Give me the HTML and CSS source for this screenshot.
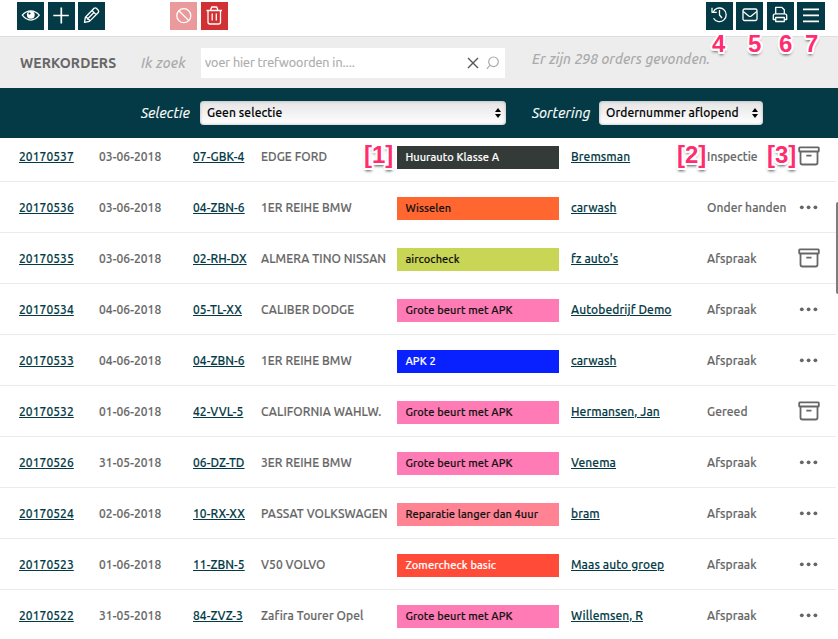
FILE: index.html
```html
<!DOCTYPE html>
<html lang="nl">
<head>
    <meta charset="UTF-8">
    <title>Werkorders</title>
    <link rel="stylesheet" href="styles.css">
</head>
<body>
<svg class="defs">
    <symbol id="archive" viewBox="0 0 22 20">
        <path d="M2.5 5.5v11q0 2 2 2h13q2 0 2-2v-11M1.8 1.3h18.4q.6 0 .6.6v3q0 .6-.6.6H1.8q-.6 0-.6-.6v-3q0-.6.6-.6zM8.3 9.6h5.2"/>
    </symbol>
    <symbol id="dots" viewBox="0 0 22 20">
        <circle cx="3.8" cy="10.3" r="1.9"/><circle cx="10.6" cy="10.3" r="1.9"/><circle cx="17.4" cy="10.3" r="1.9"/>
    </symbol>
</svg>

<div class="toolbar">
    <div class="btn"><svg viewBox="0 0 27 28"><path d="M5.3 13.2Q9 8.8 13.8 8.8T22.3 13.2Q18.5 18.1 13.8 18.1T5.3 13.2z"/><circle class="fill" cx="13.8" cy="12.8" r="3.9"/><circle class="pupil" cx="12.5" cy="11.5" r="1.1"/></svg></div>
    <div class="btn"><svg viewBox="0 0 27 28"><path class="thin" d="M5.3 13.5h15.5M13.3 5.5v16"/></svg></div>
    <div class="btn"><svg viewBox="0 0 27 28"><path d="M6.5 20.4l.9-5.2 8.7-8.9q1-.9 2.2 0l2 2q.9 1.1 0 2.2l-8.8 8.9zM14 8.5l4.1 4.1M7.4 15.2q1.9-.4 2 1.8 2.2 0 2.1 2.2M15.7 10.7l-5.7 5.8"/></svg></div>
    <div class="btn forbid"><svg viewBox="0 0 27 28"><circle cx="13.8" cy="13.7" r="7"/><path d="M8.9 8.8l9.8 9.8"/></svg></div>
    <div class="btn trash"><svg viewBox="0 0 27 28"><path d="M5.5 8.5h15.5M7 8.5v11.5q0 2 2 2h8.5q2 0 2-2v-11.5M9.5 8.2l1.2-3.2h5l1.2 3.2M11.2 11.5v7M15.3 11.5v7"/></svg></div>
    <div class="btn history"><svg viewBox="0 0 27 28"><path d="M7.2 10a6.8 6.8 0 1 1 .3 6.2M6 5.7v4.6h4.8M13.5 8v5l2.5 3"/></svg></div>
    <div class="btn mail"><svg viewBox="0 0 27 28"><rect x="7" y="7" width="14" height="11.5" rx="1.5"/><path d="M7.2 9.5l5.5 4.5q1.3.9 2.6 0l5.5-4.5"/></svg></div>
    <div class="btn print"><svg viewBox="0 0 27 28"><path d="M8.7 12V5.3h6l2.6 2.5V12M8.7 17.5H6.3v-3.7q0-2 2-2h9.4q2 0 2 2v3.7h-2.4M8.7 15.5h8.6v4H8.7z"/></svg></div>
    <div class="btn menu"><svg viewBox="0 0 28 28"><path class="thin" d="M6 7.3h16M6 13.3h16M6 19.3h16"/></svg></div>
</div>

<div class="search">
    <h1>WERKORDERS</h1>
    <span class="label">Ik zoek</span>
    <div class="field">
        <span>voer hier trefwoorden in....</span>
        <svg class="clear" viewBox="0 0 12 12"><path d="M1 1l10 10M11 1L1 11"/></svg>
        <svg class="lens" viewBox="0 0 14 14"><circle cx="7.5" cy="5.8" r="4.8"/><path d="M4.2 9.1L.8 12.8"/></svg>
    </div>
    <span class="found">Er zijn 298 orders gevonden.</span>
</div>

<div class="filter">
    <span class="label-sel">Selectie</span>
    <div class="select wide"><span>Geen selectie</span><svg viewBox="0 0 6 10"><path d="M3 0l3 4H0zM3 10l3-4H0z"/></svg></div>
    <span class="label-sort">Sortering</span>
    <div class="select"><span>Ordernummer aflopend</span><svg viewBox="0 0 6 10"><path d="M3 0l3 4H0zM3 10l3-4H0z"/></svg></div>
</div>

<div class="list">
    <div class="row"><a class="nr">20170537</a><span class="date">03-06-2018</span><a class="plate">07-GBK-4</a><span class="car">EDGE FORD</span><b class="job dark">Huurauto Klasse A</b><a class="client">Bremsman</a><span class="status">Inspectie</span><svg class="archive"><use href="#archive"/></svg></div>
    <div class="row"><a class="nr">20170536</a><span class="date">03-06-2018</span><a class="plate">04-ZBN-6</a><span class="car">1ER REIHE BMW</span><b class="job orange">Wisselen</b><a class="client">carwash</a><span class="status">Onder handen</span><svg class="dots"><use href="#dots"/></svg></div>
    <div class="row"><a class="nr">20170535</a><span class="date">03-06-2018</span><a class="plate">02-RH-DX</a><span class="car">ALMERA TINO NISSAN</span><b class="job lime">aircocheck</b><a class="client">fz auto's</a><span class="status">Afspraak</span><svg class="archive"><use href="#archive"/></svg></div>
    <div class="row"><a class="nr">20170534</a><span class="date">04-06-2018</span><a class="plate">05-TL-XX</a><span class="car">CALIBER DODGE</span><b class="job pink">Grote beurt met APK</b><a class="client">Autobedrijf Demo</a><span class="status">Afspraak</span><svg class="dots"><use href="#dots"/></svg></div>
    <div class="row"><a class="nr">20170533</a><span class="date">04-06-2018</span><a class="plate">04-ZBN-6</a><span class="car">1ER REIHE BMW</span><b class="job blue">APK 2</b><a class="client">carwash</a><span class="status">Afspraak</span><svg class="dots"><use href="#dots"/></svg></div>
    <div class="row"><a class="nr">20170532</a><span class="date">01-06-2018</span><a class="plate">42-VVL-5</a><span class="car">CALIFORNIA WAHLW.</span><b class="job pink">Grote beurt met APK</b><a class="client">Hermansen, Jan</a><span class="status">Gereed</span><svg class="archive"><use href="#archive"/></svg></div>
    <div class="row"><a class="nr">20170526</a><span class="date">31-05-2018</span><a class="plate">06-DZ-TD</a><span class="car">3ER REIHE BMW</span><b class="job pink">Grote beurt met APK</b><a class="client">Venema</a><span class="status">Afspraak</span><svg class="dots"><use href="#dots"/></svg></div>
    <div class="row"><a class="nr">20170524</a><span class="date">02-06-2018</span><a class="plate">10-RX-XX</a><span class="car">PASSAT VOLKSWAGEN</span><b class="job salmon">Reparatie langer dan 4uur</b><a class="client">bram</a><span class="status">Afspraak</span><svg class="dots"><use href="#dots"/></svg></div>
    <div class="row"><a class="nr">20170523</a><span class="date">01-06-2018</span><a class="plate">11-ZBN-5</a><span class="car">V50 VOLVO</span><b class="job red">Zomercheck basic</b><a class="client">Maas auto groep</a><span class="status">Afspraak</span><svg class="dots"><use href="#dots"/></svg></div>
    <div class="row"><a class="nr">20170522</a><span class="date">31-05-2018</span><a class="plate">84-ZVZ-3</a><span class="car">Zafira Tourer Opel</span><b class="job pink">Grote beurt met APK</b><a class="client">Willemsen, R</a><span class="status">Afspraak</span><svg class="dots"><use href="#dots"/></svg></div>
</div>

<div class="scrollbar"></div>
<div class="mark m1">[1]</div>
<div class="mark m2">[2]</div>
<div class="mark m3">[3]</div>
<div class="mark m4">4</div>
<div class="mark m5">5</div>
<div class="mark m6">6</div>
<div class="mark m7">7</div>
</body>
</html>
```
FILE: styles.css
```css
*{
    margin:0;
    padding:0;
    box-sizing: border-box;
}
body{
    height:639px;
    overflow: hidden;
    position: relative;
    display: flex;
    flex-direction: column;
    background:#fff;
    color:#666;
    font-family: Ubuntu, "Noto Sans", sans-serif;
    font-size:12px;
    white-space: nowrap;
}
.defs{
    display: none;
}
svg{
    flex:none;
    fill:none;
}
/* toolbar */
.toolbar{
    flex:none;
    height:37px;
    padding:2px 0 0 17px;
    display: flex;
    border-bottom:1px solid #ddd;
}
.btn{
    width:27px;
    height:28px;
    margin-right:4px;
    background:#033a45;
}
.btn:nth-child(2),
.btn.history,
.btn.print{
    margin-right:3px;
}
.btn svg{
    display: block;
    width:100%;
    height:28px;
    stroke:#fff;
    stroke-width:1.3;
    stroke-linejoin: round;
}
.btn .thin{
    stroke-width:1.7;
}
.btn .fill{
    fill:#fff;
    stroke:none;
}
.btn .pupil{
    fill:#033a45;
    stroke:none;
}
.btn.forbid{
    margin-left:61px;
    background:#ea9a9b;
}
.btn.trash{
    background:#d23134;
}
.btn.history{
    margin-left:474px;
}
.btn.menu{
    width:28px;
}
/* search */
.search{
    flex:none;
    height:51px;
    display: flex;
    align-items: center;
    padding-left:20px;
    background:#ededed;
}
h1{
    width:121px;
    font-size:14px;
    font-weight:700;
    letter-spacing:.1px;
}
.label{
    width:60px;
    font-size:14px;
    font-style: italic;
    font-weight:500;
    letter-spacing:.15px;
    color:#aaa;
}
.field{
    width:304px;
    height:30px;
    margin-right:27px;
    padding:0 5px 0 4px;
    display: flex;
    align-items: center;
    background:#fff;
    color:#aaa;
    font-size:12.5px;
    -webkit-text-stroke:.2px;
}
.field span{
    flex:1;
    margin-top:-1px;
}
.clear{
    width:12px;
    height:12px;
    margin-right:7px;
    stroke:#555;
    stroke-width:1.4;
}
.lens{
    width:14px;
    height:14px;
    stroke:#aaa;
    stroke-width:1.2;
}
.found{
    margin-top:-8px;
    font-size:14px;
    font-style: italic;
    font-weight:500;
    letter-spacing:.04px;
    color:#aaa;
}
/* filter */
.filter{
    flex:none;
    height:50px;
    display: flex;
    align-items: center;
    padding-left:141px;
    background:#033a45;
    color:#fff;
    font-size:14px;
    font-style: italic;
    letter-spacing:.2px;
    -webkit-text-stroke:.2px;
}
.label-sel{
    width:59px;
}
.label-sort{
    width:67px;
}
.select{
    width:164px;
    height:24px;
    padding:0 5px 0 7px;
    display: flex;
    align-items: center;
    justify-content: space-between;
    border-radius:4px;
    background:linear-gradient(#e4e4e4,#fff);
    box-shadow: inset 0 0 3px #aaa;
    color:#000;
    font-size:12px;
    font-style: normal;
    font-weight:500;
    letter-spacing:.1px;
    -webkit-text-stroke:.1px;
}
.select span{
    margin-top:-1px;
}
.select.wide{
    width:306px;
    margin-right:26px;
}
.select svg{
    width:6px;
    height:10px;
    fill:#000;
}
/* list, first row is scrolled 7px under the filter bar */
.list{
    flex:1;
    overflow: hidden;
    display: flex;
    flex-direction: column;
    justify-content: flex-end;
    margin-bottom:-2px;
}
.row{
    flex:none;
    width:836px;
    height:51px;
    display: grid;
    grid-template-columns: 80px 94px 68px 136px 174px 136px 90.5px 22px;
    align-items: center;
    padding:1px 0 0 19px;
    border-bottom:1px solid #ebebeb;
    font-weight:500;
    letter-spacing:.08px;
    -webkit-text-stroke:.15px;
}
.row a{
    justify-self: start;
    color:#033a45;
    text-decoration: underline;
    text-decoration-thickness:1px;
    text-underline-offset:1px;
    -webkit-text-stroke:.12px;
}
.job{
    width:162px;
    height:23px;
    margin-top:2px;
    padding-left:8.4px;
    line-height:23px;
    font-size:11px;
    font-weight:500;
    color:#111;
    -webkit-text-stroke:.15px;
}
.dark{
    background:#343a38;
    color:#fff;
}
.orange{
    background:#ff6630;
}
.lime{
    background:#c9d554;
}
.pink{
    background:#ff7bb5;
}
.blue{
    background:#0920ff;
    color:#fff;
}
.salmon{
    background:#ff8393;
}
.red{
    background:#ff4b37;
    color:#fff;
}
.row svg{
    width:22px;
    height:20px;
    margin-top:-1px;
}
.archive{
    stroke:#666;
    stroke-width:1.8;
}
.dots{
    fill:#666;
}
.scrollbar{
    position: absolute;
    right:0;
    top:202px;
    width:2px;
    height:92px;
    border-radius:2px 0 0 2px;
    background:#7d7d7d;
}
/* numbered marks */
.mark{
    position: absolute;
    font:bold 24px/26px "Liberation Sans", sans-serif;
    color:#ff2d6f;
    text-shadow:
        2px 0 #fff, -2px 0 #fff, 0 2px #fff, 0 -2px #fff,
        1.5px 1.5px #fff, -1.5px 1.5px #fff, 1.5px -1.5px #fff, -1.5px -1.5px #fff,
        0 3px 3px rgba(0,0,0,.7);
}
.m1{
    left:364px;
    top:142px;
}
.m2{
    left:677px;
    top:142px;
}
.m3{
    left:767px;
    top:142px;
}
.m4, .m5, .m6, .m7{
    top:31px;
}
.m4{
    left:712px;
}
.m5{
    left:748px;
}
.m6{
    left:779px;
}
.m7{
    left:805px;
}
```
